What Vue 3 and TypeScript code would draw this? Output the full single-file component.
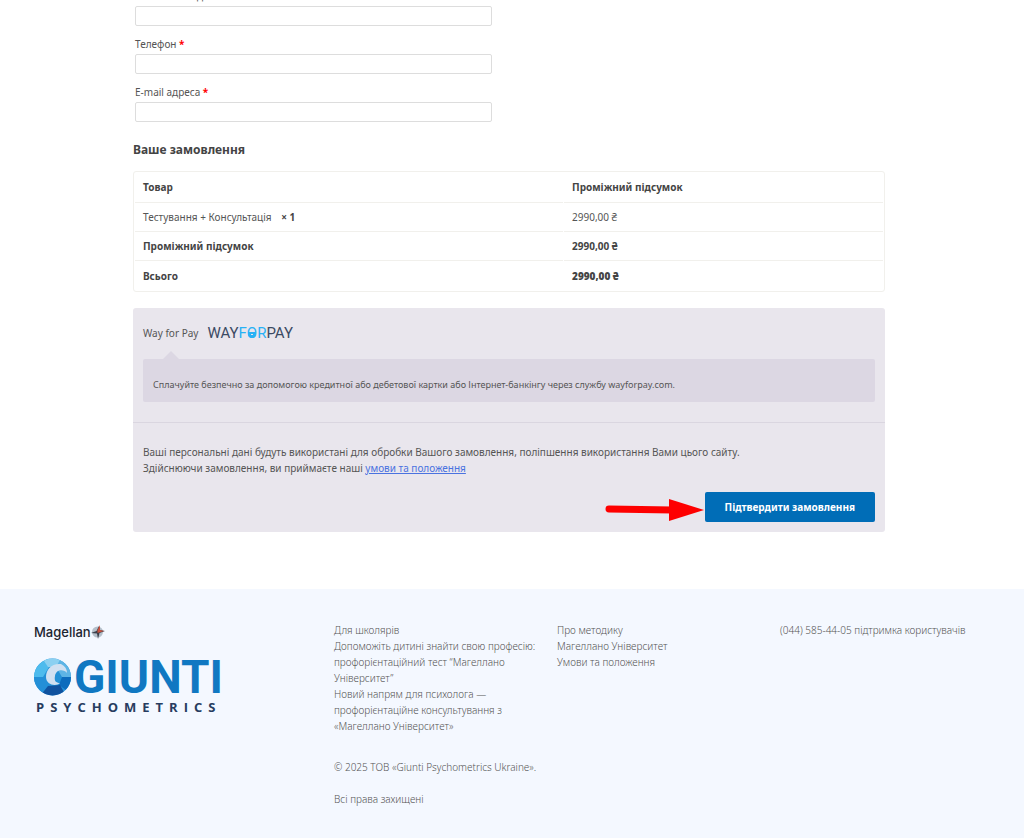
<script setup lang="ts">
interface Field {
  id: string
  label: string
  type: string
  required: boolean
}

interface TotalRow {
  label: string
  value: string
  strong?: boolean
}

const fields: Field[] = [
  { id: 'postcode', label: 'Поштовий індекс', type: 'text', required: false },
  { id: 'phone', label: 'Телефон', type: 'tel', required: true },
  { id: 'email', label: 'E-mail адреса', type: 'email', required: true },
]

const totals: TotalRow[] = [
  { label: 'Проміжний підсумок', value: '2990,00 ₴' },
  { label: 'Всього', value: '2990,00 ₴', strong: true },
]

const schoolLinks: string[] = [
  'Для школярів',
  'Допоможіть дитині знайти свою професію: профорієнтаційний тест “Магеллано Університет”',
  'Новий напрям для психолога — профорієнтаційне консультування з «Магеллано Університет»',
]

const methodLinks: string[] = ['Про методику', 'Магеллано Університет', 'Умови та положення']
</script>

<template>
  <div class="page">
    <main class="checkout">
      <form @submit.prevent>
        <div class="fields">
          <div v-for="field in fields" :key="field.id" class="field">
            <label :for="field.id">
              {{ field.label }}
              <abbr v-if="field.required" class="required">*</abbr>
            </label>
            <input :id="field.id" :type="field.type" :required="field.required" />
          </div>
        </div>

        <h3 class="heading">Ваше замовлення</h3>

        <table class="order">
          <thead>
            <tr>
              <th scope="col" class="product">Товар</th>
              <th scope="col">Проміжний підсумок</th>
            </tr>
          </thead>
          <tbody>
            <tr>
              <td>Тестування + Консультація <strong class="quantity">× 1</strong></td>
              <td>2990,00 ₴</td>
            </tr>
          </tbody>
          <tfoot>
            <tr v-for="row in totals" :key="row.label">
              <th scope="row">{{ row.label }}</th>
              <td class="total" :class="{ grand: row.strong }">{{ row.value }}</td>
            </tr>
          </tfoot>
        </table>

        <section class="payment">
          <div class="methods">
            <div class="method">
              <span>Way for Pay</span>
              <span class="wayforpay">WAY<span class="sky">F<span class="lock">O<svg viewBox="0 0 10 12" aria-hidden="true"><path fill-rule="evenodd" d="M1 5h8v2a4 4 0 0 1-8 0zM4 7v1h2v-1z" /></svg></span>R</span>PAY</span>
            </div>
            <div class="description">
              Сплачуйте безпечно за допомогою кредитної або дебетової картки або Інтернет-банкінгу через службу wayforpay.com.
            </div>
          </div>
          <div class="place">
            <p>
              Ваші персональні дані будуть використані для обробки Вашого замовлення, поліпшення використання Вами цього сайту.<br />
              Здійснюючи замовлення, ви приймаєте наші <a href="#">умови та положення</a>
            </p>
            <div class="actions">
              <svg class="arrow" width="100" height="24" viewBox="0 0 100 24" aria-hidden="true">
                <path d="M4 11 L67 12" stroke="#fe0000" stroke-width="7" stroke-linecap="round" />
                <path d="M64 1 L99 12 L64 23z" fill="#fe0000" />
              </svg>
              <button type="submit">Підтвердити замовлення</button>
            </div>
          </div>
        </section>
      </form>
    </main>

    <footer class="footer">
      <div class="brands">
        <a href="#" class="magellano" aria-label="Magellano">
          <span>Magellan</span>
          <svg width="14" height="14" viewBox="0 0 14 14" aria-hidden="true">
            <circle cx="6.500" cy="7" r="5.500" fill="#b4bfca" />
            <path d="M8 1 L8.500 5 L14 6 L8.500 8 L7 14 L6 8.500 L0 8 L5.500 6z" fill="#3a3f4a" />
            <path d="M9 0 L9 5 L13 6 L8 7.500 L6.500 8 L6.500 5z" fill="#c9503c" />
          </svg>
        </a>
        <a href="#" class="giunti" aria-label="Giunti Psychometrics">
          <span class="giunti-top">
            <svg width="38" height="38" viewBox="0 0 38 38" aria-hidden="true">
              <defs>
                <clipPath id="ball"><circle cx="18.500" cy="19" r="18.500" /></clipPath>
              </defs>
              <g clip-path="url(#ball)">
                <rect width="38" height="38" fill="#2390d6" />
                <path d="M0 0H14L15 9L9 19H0z" fill="#4dbbed" />
                <path d="M8 0H30L24 9L14 9z" fill="#8bd0f1" />
                <path d="M27 0H38V19H28L22 9z" fill="#5db4e5" />
                <path d="M38 19V32L32 32L25 27L28 19z" fill="#0c6cbd" />
                <path d="M0 19H11L15 28L7 36L0 30z" fill="#238fd7" />
                <path d="M14 28L26 27L32 38H6z" fill="#10529f" />
              </g>
              <path d="M12 19C12 11 18 5 27 6C31 8 33 11 33 15C30 11 22 11 21 18C20 23 22 25 26 25C22 29 12 27 12 19z" fill="#d0e0f1" />
            </svg>
            <span class="giunti-name">GIUNTI</span>
          </span>
          <span class="giunti-sub">PSYCHOMETRICS</span>
        </a>
      </div>
      <div class="column">
        <a v-for="link in schoolLinks" :key="link" href="#">{{ link }}</a>
        <p class="copyright">© 2025 ТОВ «Giunti Psychometrics Ukraine».</p>
        <p class="rights">Всі права захищені</p>
      </div>
      <div class="column">
        <a v-for="link in methodLinks" :key="link" href="#">{{ link }}</a>
      </div>
      <div class="column">
        <p>(044) 585-44-05 підтримка користувачів</p>
      </div>
    </footer>
  </div>
</template>

<style>
body {
  margin: 0;
  background: #fff;
}
</style>

<style scoped>
.page {
  display: flex;
  flex-direction: column;
  min-height: 100vh;
  overflow: hidden;
  font: 10px/16px "Noto Sans", "Open Sans", sans-serif;
  color: #555;
}
.checkout {
  padding: 0 139px 57px 133px;
}
.fields {
  width: 50%;
  margin-top: -12px;
  padding: 0 17px 0 2px;
  box-sizing: border-box;
}
.field {
  display: flex;
  flex-direction: column;
  gap: 2px;
  margin-bottom: 10px;
}
.required {
  color: #f00;
  font-weight: 700;
}
.field input {
  box-sizing: border-box;
  width: 100%;
  height: 20px;
  padding: 0 6px;
  border: 1px solid #ddd;
  border-radius: 2px;
  background: #fff;
  font: inherit;
}
.heading {
  margin: 18px 0 12px;
  font-size: 12px;
  line-height: 19px;
  color: #444;
}
.order {
  width: 100%;
  border: 1px solid #f1f0ec;
  border-radius: 3px;
  border-collapse: separate;
  border-spacing: 1px 0;
}
.order th,
.order td {
  height: 28px;
  padding: 0 8px;
  border-bottom: 1px solid #f1f0ec;
  text-align: left;
}
.order thead th {
  height: 30px;
}
.order .product {
  box-sizing: border-box;
  width: 57.3%;
}
.order tfoot tr:last-child > * {
  height: 30px;
  border-bottom: 0;
}
.order th,
.order .total,
.quantity {
  font-weight: 700;
  color: #444;
}
.order .grand {
  font-weight: 900;
}
.quantity {
  margin-left: 7px;
}
.payment {
  margin-top: 16px;
  border-radius: 3px;
  background: #e9e6ed;
}
.methods {
  padding: 15px 10px 20px;
  border-bottom: 1px solid #dad6e0;
}
.method {
  display: flex;
  align-items: center;
  gap: 9px;
  height: 20px;
}
.wayforpay {
  font: 15px/20px Roboto, sans-serif;
  color: #3b4a63;
}
.sky {
  color: #28b1f5;
}
.lock {
  position: relative;
}
.lock svg {
  position: absolute;
  left: 0;
  bottom: 3px;
  width: 10px;
  height: 12px;
  fill: #28b1f5;
}
.description {
  position: relative;
  margin-top: 16px;
  padding: 18px 10px 9px;
  border-radius: 2px;
  background: #dcd7e3;
  font-size: 9px;
}
.description::before {
  content: "";
  position: absolute;
  left: 20px;
  top: -8px;
  border: 8px solid transparent;
  border-top: 0;
  border-bottom-color: #dcd7e3;
}
.place {
  padding: 21px 10px 10px;
}
.place p {
  margin: 0 0 16px;
}
.place a {
  color: #4a72e0;
}
.actions {
  display: flex;
  justify-content: flex-end;
  align-items: flex-end;
}
.actions button {
  padding: 7px 20px;
  border: 0;
  border-radius: 2px;
  background: #006db7;
  color: #fff;
  font: 700 10px/16px "Noto Sans", "Open Sans", sans-serif;
}
.footer {
  flex: 1;
  display: grid;
  grid-template-columns: 284fr 207fr 207fr 207fr;
  gap: 16px;
  align-items: start;
  padding: 33px 37px 30px 34px;
  background: #f4f8ff;
  font-weight: 300;
}
.column {
  display: flex;
  flex-direction: column;
}
.column a,
.brands a {
  color: inherit;
  text-decoration: none;
}
.column p {
  margin: 0;
}
.column .copyright {
  margin-top: 25px;
}
.column .rights {
  margin-top: 16px;
}
.brands {
  display: flex;
  flex-direction: column;
  gap: 16px;
}
.magellano {
  display: flex;
  align-items: center;
  height: 20px;
}
.brands .magellano {
  color: #1b2430;
  font: 500 13px/20px Inter, sans-serif;
}
.giunti,
.giunti-top {
  display: flex;
}
.giunti {
  flex-direction: column;
}
.giunti-top {
  align-items: center;
  gap: 2px;
  height: 38px;
}
.giunti-name {
  font: 700 46px/38px Roboto, sans-serif;
  color: #1078c2;
}
.giunti-sub {
  padding: 3px 2px;
  font: 700 13px/16px "Open Sans", sans-serif;
  letter-spacing: 6px;
  color: #273c60;
}
</style>
